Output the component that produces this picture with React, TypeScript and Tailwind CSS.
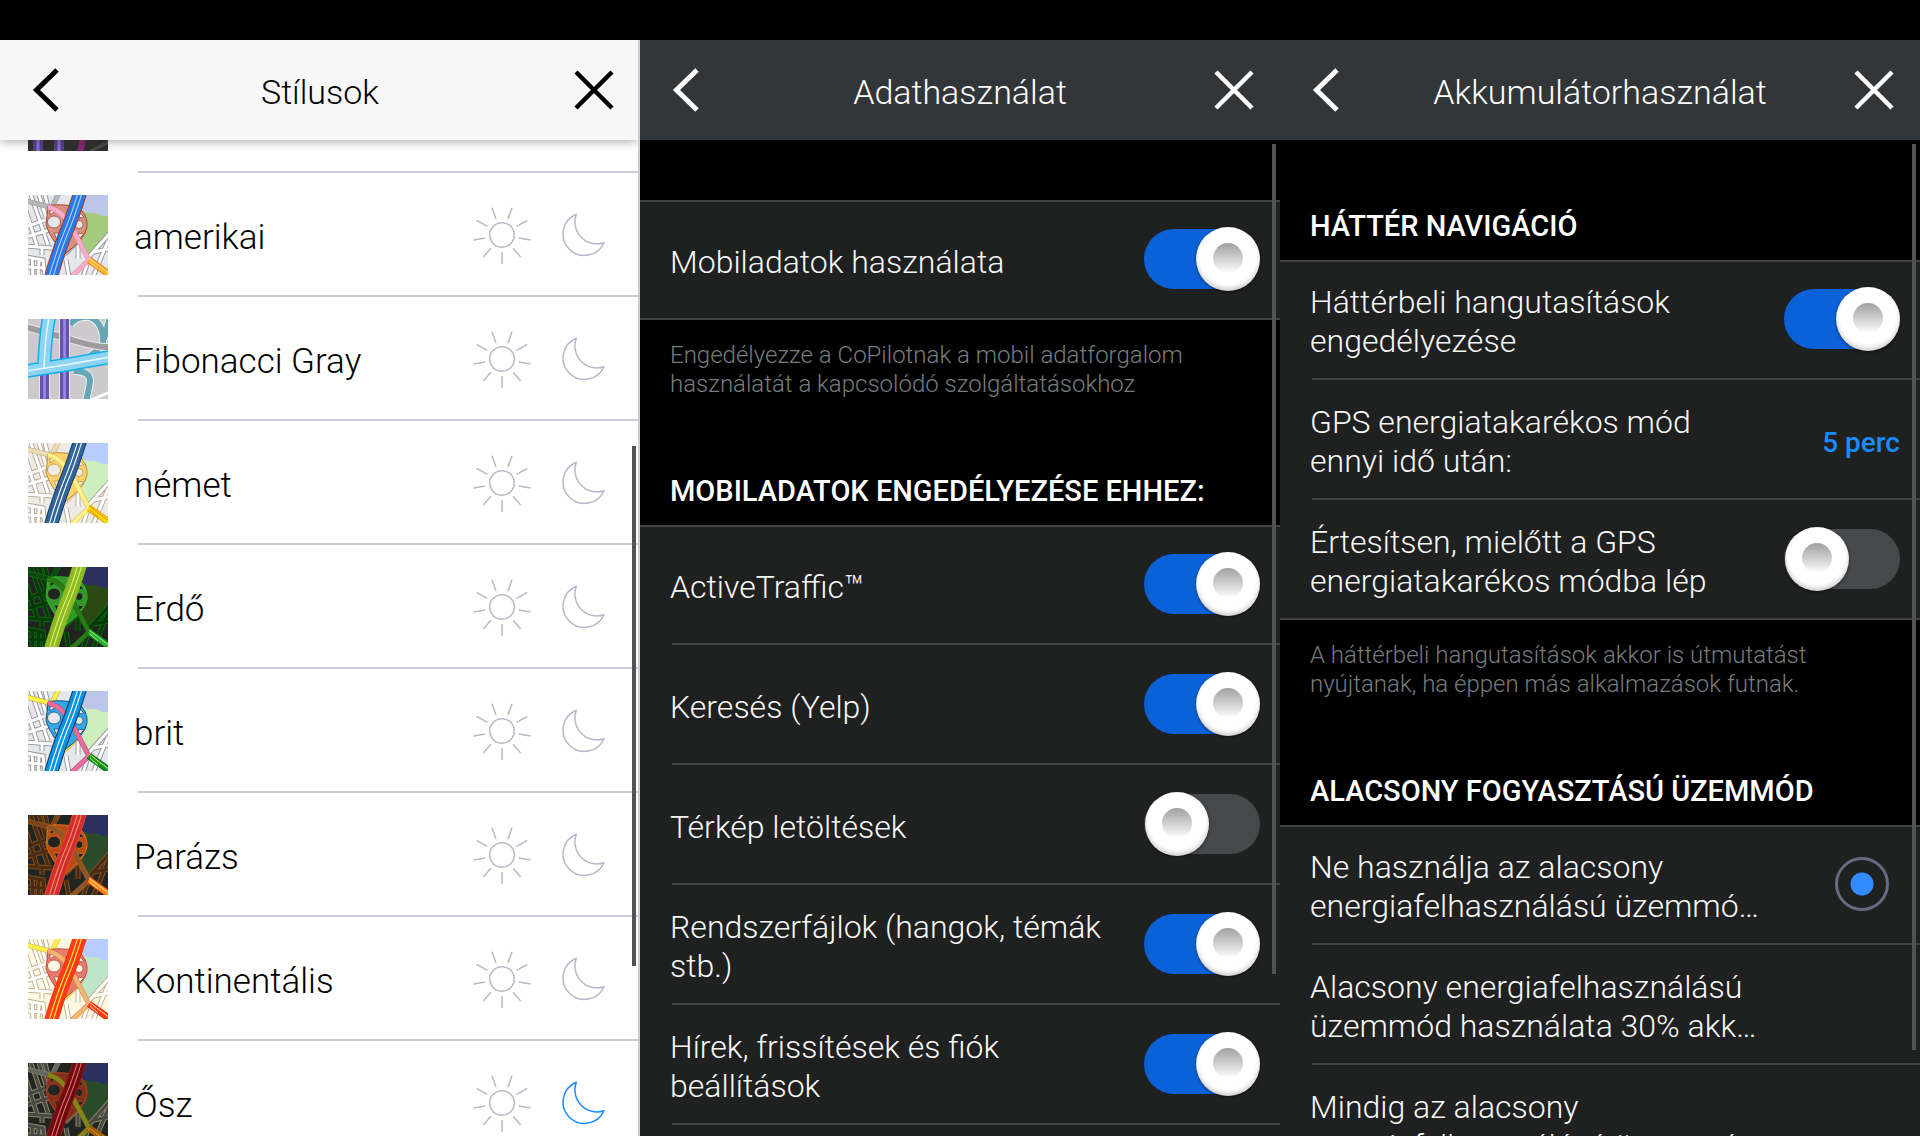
import { useState, type ReactNode } from 'react'

type MapPalette = {
  land: string
  water: string
  park: string
  street: string
  streetEdge: string
  minor: string
  minorEdge: string
  ring: string
  ringEdge: string
  ramp: string
  rampEdge: string
  exit: string
  exitLine: string
  exitEdge: string
  highway: string
  highwayEdge: string
  lane: string
}

type Style = { name: string; map: ReactNode }

const PALETTES: Record<string, MapPalette> = {
  american: {
    land: '#e4e8ec', water: '#bcc6e8', park: '#a4cb7c', street: '#ffffff', streetEdge: '#9a9a9a',
    minor: '#b4b8b8', minorEdge: '#8e9292', ring: '#d4927f', ringEdge: '#a8412e', ramp: '#f7adc9',
    rampEdge: '#d987a8', exit: '#ffb52e', exitLine: '#ffe08a', exitEdge: '#f07c1c', highway: '#2c78e4',
    highwayEdge: '#a33a2c', lane: '#a9d4ff',
  },
  german: {
    land: '#eeebe6', water: '#b9ccff', park: '#cdeebd', street: '#ffffff', streetEdge: '#b8ad98',
    minor: '#eeddb4', minorEdge: '#b8a57c', ring: '#fbd36a', ringEdge: '#c28a3a', ramp: '#fff08c',
    rampEdge: '#e0c050', exit: '#ffdc00', exitLine: '#f08a00', exitEdge: '#e8a000', highway: '#33659d',
    highwayEdge: '#123a66', lane: '#ffffff',
  },
  forest: {
    land: '#222222', water: '#2a3160', park: '#2b4b12', street: '#043804', streetEdge: '#0c6a10',
    minor: '#0a4a0c', minorEdge: '#14801c', ring: '#35962a', ringEdge: '#2cb42c', ramp: '#2a7a16',
    rampEdge: '#1c6410', exit: '#2fae2f', exitLine: '#8bf28b', exitEdge: '#1d6d1d', highway: '#8fb91f',
    highwayEdge: '#79b832', lane: '#d5f47c',
  },
  british: {
    land: '#e4e8ec', water: '#bcc6e8', park: '#cdeebd', street: '#ffffff', streetEdge: '#9a9a9a',
    minor: '#fff04a', minorEdge: '#b09a3a', ring: '#35a8ec', ringEdge: '#1d4f74', ramp: '#ec6a9c',
    rampEdge: '#a8506e', exit: '#0c9630', exitLine: '#e8f03a', exitEdge: '#056a20', highway: '#0a93e4',
    highwayEdge: '#12354c', lane: '#ffffff',
  },
  ember: {
    land: '#222422', water: '#2a3160', park: '#2b4a2a', street: '#4a2a12', streetEdge: '#80501c',
    minor: '#7a4418', minorEdge: '#9a6420', ring: '#b84c14', ringEdge: '#e0741c', ramp: '#8e5424',
    rampEdge: '#a86a2c', exit: '#ff8a1c', exitLine: '#ffe08a', exitEdge: '#e04a1c', highway: '#d42c2c',
    highwayEdge: '#e04a32', lane: '#f4906a',
  },
  continental: {
    land: '#fff9e4', water: '#b9ccff', park: '#bde6c8', street: '#ffffff', streetEdge: '#c4b48c',
    minor: '#fff04a', minorEdge: '#d0b040', ring: '#e67c70', ringEdge: '#c04a40', ramp: '#f4b474',
    rampEdge: '#d08a50', exit: '#ff3c1c', exitLine: '#ffe0a0', exitEdge: '#e02c0c', highway: '#ff3c14',
    highwayEdge: '#f03a14', lane: '#fff04a',
  },
  autumn: {
    land: '#222422', water: '#2a3160', park: '#2b4a2a', street: '#484844', streetEdge: '#8a8a68',
    minor: '#666660', minorEdge: '#8c8c70', ring: '#82301a', ringEdge: '#b8441c', ramp: '#87841a',
    rampEdge: '#6c6a14', exit: '#c4780c', exitLine: '#704808', exitEdge: '#8a5408', highway: '#6c0c10',
    highwayEdge: '#8c1c1c', lane: '#e46a6a',
  },
}

const STREETS =
  'M-2 16L9 51M3 0L20 50M11 0L18 22M17 0L20 12M-2 32L17 25M-2 42L21 35M-2 51L24 53M14 52V60M-2 62L15 65L17 82M-2 72L16 73M4 62L5 82M11 65L10 82M50 44V64M38 65L41 82M82 38L59 64M80 46L65 82M66 57L80 54M55 82L60 66'
const MINOR = 'M-2 6L22 12M31 -2L24 12M50 46L37 59'
const RAMP = 'M20 12Q30 14 37 23M45 35L61 65L43 82'
const RING = 'M20 11Q30 8 50 12Q60 20 59 32Q57 44 38 58Q24 48 18 30Z'
const HIGHWAY = 'M52 -2Q44 24 37 40Q30 58 23 82'

function RoadMap({ palette: p }: { palette: MapPalette }) {
  return (
    <svg viewBox="0 0 80 80" className="size-20 shrink-0" fill="none" aria-hidden="true">
      <rect width="80" height="80" fill={p.land} />
      <path d="M50 0H80V24H50Z" fill={p.water} />
      <path d="M50 14L57 17Q60 19 68 18L74 21H80V40L61 64L48 44Z" fill={p.park} />
      <path d={STREETS} stroke={p.streetEdge} strokeWidth="5" />
      <path d={STREETS} stroke={p.street} strokeWidth="3" />
      <path d={MINOR} stroke={p.minorEdge} strokeWidth="5" />
      <path d={MINOR} stroke={p.minor} strokeWidth="4" />
      <path d={RING} fill={p.ring} stroke={p.ringEdge} />
      <g fill={p.land} stroke={p.ringEdge} strokeWidth="0.8">
        <ellipse cx="26" cy="27" rx="6.5" ry="6" />
        <circle cx="51" cy="29.5" r="4" />
        <path d="M26 38H32L29 45ZM50 38L56 39L51 44ZM51 17L56 22L51 23ZM22 15L28 16L22 20Z" />
      </g>
      <path d={RAMP} stroke={p.rampEdge} strokeWidth="5" />
      <path d={RAMP} stroke={p.ramp} strokeWidth="4" />
      <path d="M61 65L82 80" stroke={p.exitEdge} strokeWidth="7" />
      <path d="M61 65L82 80" stroke={p.exit} strokeWidth="5" />
      <path d="M61 63L82 79M62 67L70 74" stroke={p.exitLine} />
      <path d={HIGHWAY} stroke={p.highwayEdge} strokeWidth="14" />
      <path d={HIGHWAY} stroke={p.highway} strokeWidth="12" />
      <path d="M50 -2Q42 24 35 40Q28 58 21 82M54 -2Q46 24 39 40Q32 58 25 82" stroke={p.lane} strokeWidth="1.1" />
    </svg>
  )
}

function GrayMap() {
  return (
    <svg viewBox="0 0 80 80" className="size-20 shrink-0" fill="none" aria-hidden="true">
      <rect width="80" height="80" fill="#cdcacd" />
      <path d="M42 6Q48 -4 62 -2Q76 4 75 24M82 -2L76 20M62 37L72 29" stroke="#e6f2f4" strokeWidth="8" />
      <path d="M42 6Q48 -4 62 -2Q76 4 75 24M82 -2L76 20M62 37L72 29" stroke="#6aa5b4" strokeWidth="6" />
      <path d="M-2 8L44 21Q70 29 82 28" stroke="#ecebec" strokeWidth="8" />
      <path d="M-2 8L44 21Q70 29 82 28" stroke="#9f9c9f" strokeWidth="6" />
      <path d="M46 52Q62 52 62 62Q61 70 58 82" stroke="#e6f2f4" strokeWidth="8" />
      <path d="M46 52Q62 52 62 62Q61 70 58 82" stroke="#6aa5b4" strokeWidth="6" />
      <path d="M61 82L82 73" stroke="#fff" strokeWidth="3" />
      <path d="M36.5 0V80M16.5 52V80" stroke="#e8e6f6" strokeWidth="11" />
      <path d="M36.5 0V80M16.5 52V80" stroke="#6554a8" strokeWidth="9" />
      <path d="M36.5 0V80M16.5 52V80" stroke="#9c8af4" strokeWidth="2.5" />
      <path d="M21 -2Q17 20 16 50M-2 52Q40 46 82 38" stroke="#0fb0ee" strokeWidth="14" />
      <path d="M21 -2Q17 20 16 50M-2 52Q40 46 82 38" stroke="#8ed4f0" strokeWidth="11" />
      <path d="M21 -2Q17 20 16 49M-2 52Q40 46 82 38" stroke="#e4f6ff" strokeWidth="1.5" />
    </svg>
  )
}

function NightMap() {
  return (
    <svg viewBox="0 0 80 80" className="size-20 shrink-0" fill="none" aria-hidden="true">
      <rect width="80" height="80" fill="#2e2e2e" />
      <path d="M10 0V80M31 0V80" stroke="#54408c" strokeWidth="10" />
      <path d="M10 0V80M31 0V80" stroke="#8e70d8" strokeWidth="3" />
      <path d="M62 80Q70 77 82 70" stroke="#4a4a4a" strokeWidth="3" />
      <path d="M57 58L52 82" stroke="#8c2474" strokeWidth="6" />
    </svg>
  )
}

const STYLES: Style[] = [
  { name: 'amerikai', map: <RoadMap palette={PALETTES.american} /> },
  { name: 'Fibonacci Gray', map: <GrayMap /> },
  { name: 'német', map: <RoadMap palette={PALETTES.german} /> },
  { name: 'Erdő', map: <RoadMap palette={PALETTES.forest} /> },
  { name: 'brit', map: <RoadMap palette={PALETTES.british} /> },
  { name: 'Parázs', map: <RoadMap palette={PALETTES.ember} /> },
  { name: 'Kontinentális', map: <RoadMap palette={PALETTES.continental} /> },
  { name: 'Ősz', map: <RoadMap palette={PALETTES.autumn} /> },
]

function SunIcon() {
  return (
    <svg viewBox="-30 -30 60 60" className="size-[60px]" fill="none" stroke="currentColor" strokeWidth="1.5">
      <circle r="12.3" />
      <path d="M-10 -27.3L-6 -16M10 -27.3L6 -16M-25.3 -14.7L-14.7 -8.7M25.3 -14.7L14.7 -8.7M-28.7 5L-16.7 3M28.7 5L16.7 3M-18.7 22L-11 13.3M18.7 22L11 13.3M0 17V29" />
    </svg>
  )
}

function MoonIcon() {
  return (
    <svg viewBox="0 0 44 44" className="size-11" fill="none" stroke="currentColor" strokeWidth="1.5">
      <path d="M14.3 1.2A21.4 21.4 0 1 0 42 29.7A22 22 0 0 1 14.3 1.2Z" strokeLinejoin="round" />
    </svg>
  )
}

function Header({ title, light }: { title: string; light?: boolean }) {
  return (
    <header
      className={`relative z-10 flex h-[100px] shrink-0 items-center justify-between ${
        light
          ? 'bg-[#f7f7f7] pr-6 pl-[26px] text-black shadow-[0_1px_10px_rgba(60,40,40,0.45)]'
          : 'bg-[#323638] px-[26px] text-white'
      }`}
    >
      <button type="button" aria-label="Vissza" className="cursor-pointer">
        <svg viewBox="0 0 40 44" className="h-11 w-10" fill="none" stroke="currentColor" strokeWidth="5">
          <path d="M31 2L10.500 22L31 42" />
        </svg>
      </button>
      <h1 className="pt-1 text-[34px] leading-10 font-light">{title}</h1>
      <button type="button" aria-label="Bezárás" className="cursor-pointer">
        <svg viewBox="0 0 40 40" className="size-10" fill="none" stroke="currentColor" strokeWidth="4.5">
          <path d="M2 2L38 38M38 2L2 38" />
        </svg>
      </button>
    </header>
  )
}

function StyleRow({ name, map, night, onNight }: Style & { night: boolean; onNight: () => void }) {
  return (
    <li className="flex h-[124px] items-stretch gap-[30px] pl-7">
      <div className="flex items-center">{map}</div>
      <div className="flex flex-1 items-center border-b-2 border-[#cecdd6] pr-8 -indent-1">
        <span className="flex-1 pt-2 text-[35px] leading-10 font-light text-black">{name}</span>
        <button type="button" aria-label={`${name}, nappali`} className="mr-[30px] cursor-pointer pt-0.5 text-[#b8b8cb]">
          <SunIcon />
        </button>
        <button
          type="button"
          aria-label={`${name}, éjszakai`}
          aria-pressed={night}
          onClick={onNight}
          className={`cursor-pointer pt-0.5 ${night ? 'text-[#1a8cff]' : 'text-[#b8b8cb]'}`}
        >
          <MoonIcon />
        </button>
      </div>
    </li>
  )
}

function Section({ children }: { children: ReactNode }) {
  return <div className="bg-[#1f2020] shadow-[inset_0_2px_0_#424347]">{children}</div>
}

function Row({ label, htmlFor, last, children }: { label: string; htmlFor: string; last?: boolean; children?: ReactNode }) {
  return (
    <div className={last ? 'border-b-2 border-[#424347]' : 'pl-8'}>
      <div
        className={`flex items-center justify-between pr-5 ${
          last ? 'h-[118px] pl-[30px]' : 'h-[120px] border-b-2 border-[#424347]'
        }`}
      >
        <label
          htmlFor={htmlFor}
          className={`pt-1.5 text-[32px] leading-[39px] font-light whitespace-pre-line text-[#f7f7f7] ${last ? '' : '-ml-0.5'}`}
        >
          {label}
        </label>
        {children}
      </div>
    </div>
  )
}

function Toggle({ id, on }: { id: string; on?: boolean }) {
  return (
    <input
      id={id}
      type="checkbox"
      role="switch"
      defaultChecked={on}
      className="relative h-[60px] w-[116px] shrink-0 cursor-pointer appearance-none rounded-full bg-[#45494b] before:absolute before:-top-0.5 before:left-px before:size-16 before:rounded-full before:bg-white before:shadow-[inset_0_-3px_4px_rgba(0,0,0,0.18),0_1px_3px_rgba(0,0,0,0.5)] after:absolute after:top-[14px] after:left-[18px] after:size-[30px] after:rounded-full after:bg-linear-to-b after:from-[#a0a0a0] after:to-white checked:bg-[#0b62d8] checked:before:left-[52px] checked:after:left-[69px]"
    />
  )
}

function Radio({ id, on }: { id: string; on?: boolean }) {
  return (
    <input
      id={id}
      type="radio"
      name="low-power"
      defaultChecked={on}
      className="mr-[11px] size-[54px] shrink-0 cursor-pointer appearance-none rounded-full checked:border-3 checked:border-[#676b80] checked:bg-radial checked:from-[#338cff] checked:from-[11px] checked:to-transparent checked:to-[12px]"
    />
  )
}

function Heading({ children }: { children: ReactNode }) {
  return <h2 className="pb-4 pl-[30px] text-[29px] leading-9 font-medium text-white">{children}</h2>
}

function Note({ children }: { children: string }) {
  return (
    <p className="pt-[21px] pl-[30px] text-2xl leading-[29px] font-light whitespace-pre-line text-[#757d7f]">
      {children}
    </p>
  )
}

export default function App() {
  const [night, setNight] = useState('Ősz')

  return (
    <main className="grid h-screen grid-cols-3 overflow-hidden bg-black pt-10 font-[Roboto,sans-serif]">
      <section className="relative flex min-h-0 flex-col overflow-hidden border-r-2 border-[#cecdd6] bg-white">
        <Header title="Stílusok" light />
        <ul className="-mt-[91px]">
          <StyleRow name="" map={<NightMap />} night={false} onNight={() => setNight('')} />
          {STYLES.map((s) => (
            <StyleRow key={s.name} {...s} night={night === s.name} onNight={() => setNight(s.name)} />
          ))}
        </ul>
        <div className="absolute top-[406px] right-0.5 h-[520px] w-1 bg-[#505356]" />
      </section>

      <section className="relative flex min-h-0 flex-col overflow-hidden">
        <Header title="Adathasználat" />
        <div className="pt-[60px]">
          <Section>
            <Row label="Mobiladatok használata" htmlFor="mobile-data" last>
              <Toggle id="mobile-data" on />
            </Row>
          </Section>
          <Note>{'Engedélyezze a CoPilotnak a mobil adatforgalom\nhasználatát a kapcsolódó szolgáltatásokhoz'}</Note>
          <div className="pt-[74px]">
            <Heading>MOBILADATOK ENGEDÉLYEZÉSE EHHEZ:</Heading>
          </div>
          <Section>
            <Row label="ActiveTraffic™" htmlFor="traffic">
              <Toggle id="traffic" on />
            </Row>
            <Row label="Keresés (Yelp)" htmlFor="search">
              <Toggle id="search" on />
            </Row>
            <Row label="Térkép letöltések" htmlFor="maps">
              <Toggle id="maps" />
            </Row>
            <Row label={'Rendszerfájlok (hangok, témák\nstb.)'} htmlFor="system">
              <Toggle id="system" on />
            </Row>
            <Row label={'Hírek, frissítések és fiók\nbeállítások'} htmlFor="news">
              <Toggle id="news" on />
            </Row>
            <div className="h-[120px]" />
          </Section>
        </div>
        <div className="absolute top-[104px] right-1 h-[830px] w-1 bg-[#525357]" />
      </section>

      <section className="relative flex min-h-0 flex-col overflow-hidden">
        <Header title="Akkumulátorhasználat" />
        <div className="pt-[68px]">
          <Heading>HÁTTÉR NAVIGÁCIÓ</Heading>
          <Section>
            <Row label={'Háttérbeli hangutasítások\nengedélyezése'} htmlFor="voice">
              <Toggle id="voice" on />
            </Row>
            <Row label={'GPS energiatakarékos mód\nennyi idő után:'} htmlFor="gps-delay">
              <button id="gps-delay" type="button" className="cursor-pointer pt-2 text-[28px] font-medium text-[#1a8cff]">
                5 perc
              </button>
            </Row>
            <Row label={'Értesítsen, mielőtt a GPS\nenergiatakarékos módba lép'} htmlFor="gps-notify" last>
              <Toggle id="gps-notify" />
            </Row>
          </Section>
          <Note>{'A háttérbeli hangutasítások akkor is útmutatást\nnyújtanak, ha éppen más alkalmazások futnak.'}</Note>
          <div className="pt-[74px]">
            <Heading>ALACSONY FOGYASZTÁSÚ ÜZEMMÓD</Heading>
          </div>
          <Section>
            <Row label={'Ne használja az alacsony\nenergiafelhasználású üzemmó…'} htmlFor="low-never">
              <Radio id="low-never" on />
            </Row>
            <Row label={'Alacsony energiafelhasználású\nüzemmód használata 30% akk…'} htmlFor="low-30">
              <Radio id="low-30" />
            </Row>
            <Row label={'Mindig az alacsony\nenergiafelhasználású üzemmó…'} htmlFor="low-always">
              <Radio id="low-always" />
            </Row>
          </Section>
        </div>
        <div className="absolute top-[104px] right-1 h-[906px] w-1 bg-[#525357]" />
      </section>
    </main>
  )
}
